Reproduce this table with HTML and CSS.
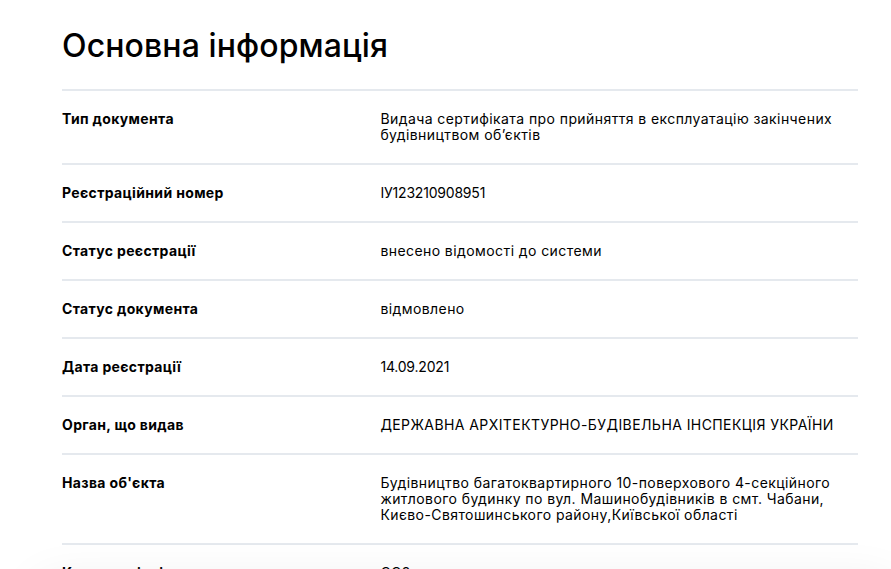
FILE: index.html
```html
<!DOCTYPE html>
<html lang="uk">
<head>
<meta charset="utf-8">
<link rel="stylesheet" href="styles.css">
</head>
<body>
<main class="page">
  <h1 class="title">Основна інформація</h1>
  <dl class="info">
    <div class="row"><dt>Тип документа</dt><dd>Видача сертифіката про прийняття в експлуатацію закінчених будівництвом об’єктів</dd></div>
    <div class="row"><dt>Реєстраційний номер</dt><dd class="num">ІУ123210908951</dd></div>
    <div class="row"><dt>Статус реєстрації</dt><dd>внесено відомості до системи</dd></div>
    <div class="row"><dt>Статус документа</dt><dd>відмовлено</dd></div>
    <div class="row"><dt>Дата реєстрації</dt><dd class="num">14.09.2021</dd></div>
    <div class="row"><dt>Орган, що видав</dt><dd>ДЕРЖАВНА АРХІТЕКТУРНО-БУДІВЕЛЬНА ІНСПЕКЦІЯ УКРАЇНИ</dd></div>
    <div class="row"><dt>Назва об'єкта</dt><dd>Будівництво багатоквартирного 10-поверхового 4-секційного житлового будинку по вул. Машинобудівників в смт. Чабани, Києво-Святошинського району,Київської області</dd></div>
    <div class="row"><dt>Клас наслідків</dt><dd>СС2</dd></div>
  </dl>
</main>
<div class="bottom-bar"></div>
</body>
</html>
```
FILE: styles.css
```css
html, body {
  margin: 0;
  padding: 0;
  background: #fff;
  overflow: hidden;
}
body {
  font-family: "Inter", "Liberation Sans", Arial, sans-serif;
  color: #000;
}
.page {
  padding: 27px 33px 0 62px;
}
.title {
  margin: 0 0 25px;
  font-size: 32px;
  line-height: 37px;
  font-weight: 500;
  letter-spacing: 0.1px;
}
.info {
  margin: 0;
}
.row {
  display: grid;
  grid-template-columns: 40% 60%;
  border-top: 2px solid #e5e9ee;
  padding: 20px 0 20px;
  font-size: 14px;
  line-height: 16px;
}
.row dt {
  font-weight: 700;
  font-size: 14px;
  letter-spacing: 0.35px;
}
.row dd {
  margin: 0;
  padding-right: 10px;
  letter-spacing: 0.42px;
}
.row dd.num {
  letter-spacing: -0.2px;
}
.bottom-bar {
  position: fixed;
  left: 40px;
  right: 0;
  top: 585px;
  height: 80px;
  background: #fff;
  box-shadow: 0 0 50px rgba(0, 0, 0, 0.09);
}
```
